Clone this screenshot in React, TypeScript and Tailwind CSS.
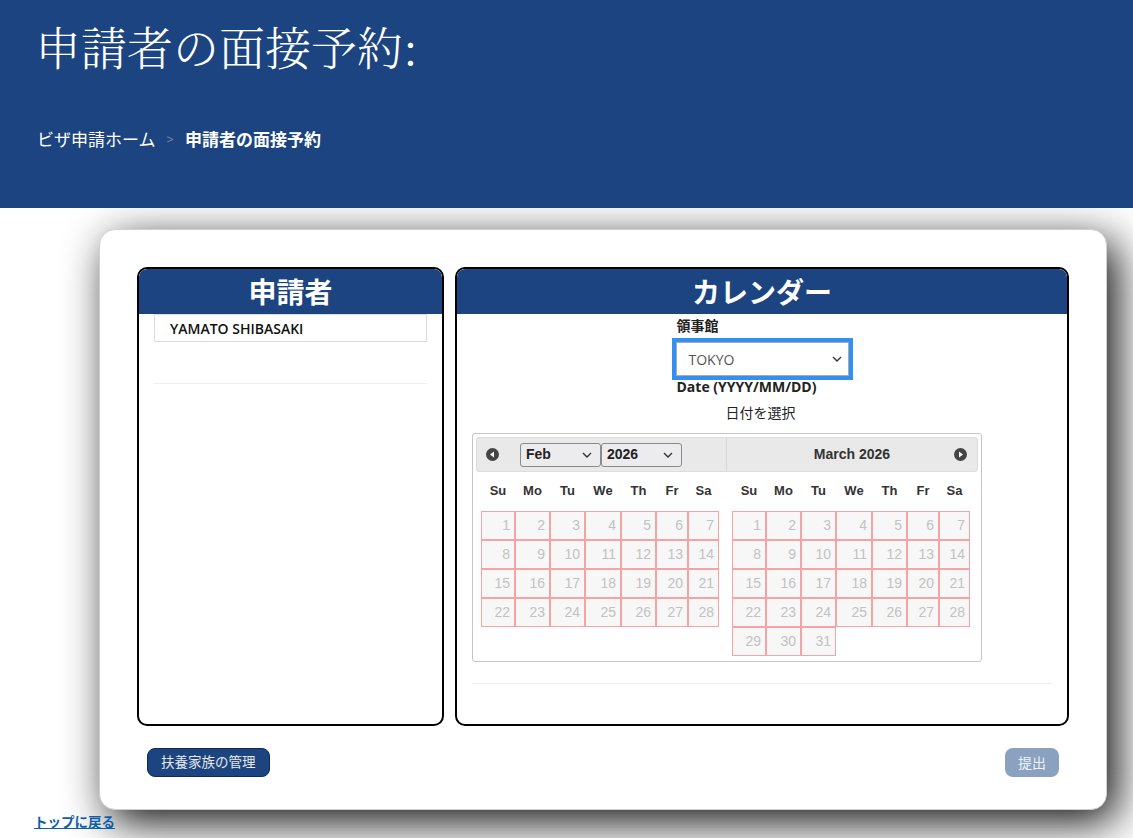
import React from 'react';

const jp = 'font-["Segoe_UI","Open_Sans","Noto_Sans_CJK_JP",sans-serif]';
const arial = 'font-["Liberation_Sans","Noto_Sans_CJK_JP",sans-serif]';

const dayNames = ['Su', 'Mo', 'Tu', 'We', 'Th', 'Fr', 'Sa'];
const cols = 'grid grid-cols-[34px_35px_35px_36px_35px_32px_31px]';

function CircleArrow({ dir }: { dir: 'prev' | 'next' }) {
  return (
    <svg width="13" height="13" viewBox="0 0 13 13">
      <circle cx="6.5" cy="6.5" r="6.5" fill="#444" />
      {dir === 'prev' ? (
        <path d="M4 6.5 L8 3.5 L8 9.5 Z" fill="#fff" />
      ) : (
        <path d="M9 6.5 L5 3.5 L5 9.5 Z" fill="#fff" />
      )}
    </svg>
  );
}

function Chevron() {
  return (
    <svg width="10" height="6" viewBox="0 0 10 6">
      <path d="M1 1 L5 5 L9 1" stroke="#333" strokeWidth="1.4" fill="none" />
    </svg>
  );
}

function MonthGrid({ days }: { days: number }) {
  const list = Array.from({ length: days }, (_, i) => i + 1);
  return (
    <div className="px-[5px]">
      <div className={`${cols} h-[20px] mt-[9px] mb-[10px] items-center`}>
        {dayNames.map((d) => (
          <div key={d} className="text-center text-[13px] font-bold text-[#333]">
            {d}
          </div>
        ))}
      </div>
      <div className={cols}>
        {list.map((n) => (
          <div
            key={n}
            className="h-[29px] border border-[#f5a3a3] bg-[#f7f7f7] flex items-center justify-end pr-[4px] text-[14px] text-[#c2c2c2]"
          >
            {n}
          </div>
        ))}
      </div>
    </div>
  );
}

function MiniSelect({ label }: { label: string }) {
  return (
    <div className="w-[81px] h-[24px] border border-[#8a8a8a] rounded-[3px] bg-[#ececef] flex items-center justify-between pl-[5px] pr-[8px] text-[14px] font-bold text-[#222]">
      <span>{label}</span>
      <Chevron />
    </div>
  );
}

function Datepicker() {
  return (
    <div className={`${arial} w-[510px] border border-[#c5c5c5] rounded-[3px] p-[3px] pb-[5px] bg-white`}>
      <div className="flex h-[35px] bg-[#e9e9e9] border border-[#dddddd] rounded-[3px]">
        <div className="w-[250px] flex items-center pl-[9px] border-r border-[#d6d6d6]">
          <CircleArrow dir="prev" />
          <div className="flex ml-[21px]">
            <MiniSelect label="Feb" />
            <MiniSelect label="2026" />
          </div>
        </div>
        <div className="flex-1 flex items-center relative">
          <span className="flex-1 text-center text-[14px] font-bold text-[#333]">March 2026</span>
          <span className="absolute right-[10px] top-[10px]">
            <CircleArrow dir="next" />
          </span>
        </div>
      </div>
      <div className="flex">
        <div className="w-[251px]">
          <MonthGrid days={28} />
        </div>
        <div className="w-[251px]">
          <MonthGrid days={31} />
        </div>
      </div>
    </div>
  );
}

function PanelHeader({ title }: { title: string }) {
  return (
    <div className="h-[45px] bg-[#1c4480] rounded-t-[8px] flex items-center justify-center">
      <span className="text-white text-[28px] font-bold leading-none">{title}</span>
    </div>
  );
}

export default function App() {
  return (
    <div className={`${jp} min-h-[838px] bg-white overflow-hidden`}>
      {/* Page header */}
      <div className="h-[208px] bg-[#1c4480] pl-[35px] pt-[18px] relative z-10">
        <h1 className="text-white text-[46px] leading-[54px] font-light font-['Noto_Serif_CJK_JP','Noto_Sans_CJK_JP',serif]">
          申請者の面接予約:
        </h1>
        <div className="mt-[55px] pl-[2px] flex items-center text-[17px] text-white">
          <span>ビザ申請ホーム</span>
          <span className="mx-[11px] text-[#7f8ba0] text-[13px]">&gt;</span>
          <span className="font-bold">申請者の面接予約</span>
        </div>
      </div>

      {/* Card */}
      <div className="ml-[99px] mt-[21px] w-[1008px] bg-white rounded-[16px] border border-[#d0d0d0] shadow-[10px_12px_44px_rgba(0,0,0,0.95)] px-[37px] pt-[37px] pb-[32px]">
        <div className="flex gap-[11px] h-[459px]">
          {/* Applicant panel */}
          <div className="w-[307px] border-2 border-black rounded-[10px] overflow-hidden flex flex-col">
            <PanelHeader title="申請者" />
            <div className="px-[15px]">
              <div className="h-[28px] border border-[#dddddd] flex items-center pl-[15px] text-[14px] font-semibold text-[#111]">
                YAMATO SHIBASAKI
              </div>
              <div className="mt-[41px] border-t border-[#eeeeee]" />
            </div>
          </div>

          {/* Calendar panel */}
          <div className="flex-1 border-2 border-black rounded-[10px] overflow-hidden flex flex-col">
            <PanelHeader title="カレンダー" />
            <div className="px-[15px]">
              <div className="w-[181px] mx-auto pt-[3px]">
                <div className="pl-[5px] text-[14px] font-bold text-[#222] leading-[18px]">領事館</div>
                <div className="mt-[3px] border-[4px] border-[#3490f0] h-[42px]">
                  <div className="h-full border border-[#aaaaaa] bg-white flex items-center justify-between pl-[12px] pr-[6px] text-[14px] text-[#555]">
                    <span>TOKYO</span>
                    <Chevron />
                  </div>
                </div>
                <div className="pl-[5px] text-[14px] font-bold text-[#222] leading-[18px] mt-[-2px]">
                  Date (YYYY/MM/DD)
                </div>
              </div>
              <div className="text-center text-[14px] text-[#222] mt-[8px] leading-[18px] pr-[3px]">日付を選択</div>
              <div className="mt-[11px]">
                <Datepicker />
              </div>
              <div className="mt-[21px] border-t border-[#eeeeee]" />
            </div>
          </div>
        </div>

        {/* Buttons */}
        <div className="mt-[22px] flex justify-between px-[10px]">
          <button className="h-[29px] px-[13px] rounded-[8px] bg-[#1c4480] border border-[#0f2b57] text-[13.5px] text-[#e8e8e8]">
            扶養家族の管理
          </button>
          <button className="h-[29px] px-[13px] rounded-[8px] bg-[#8ba1c0] text-[14px] text-[#eef2f7]">
            提出
          </button>
        </div>
      </div>

      <div className="pl-[34px] mt-[-1px]">
        <a className="text-[13.5px] font-bold text-[#0f5fa8] underline leading-[18px]">トップに戻る</a>
      </div>
    </div>
  );
}
